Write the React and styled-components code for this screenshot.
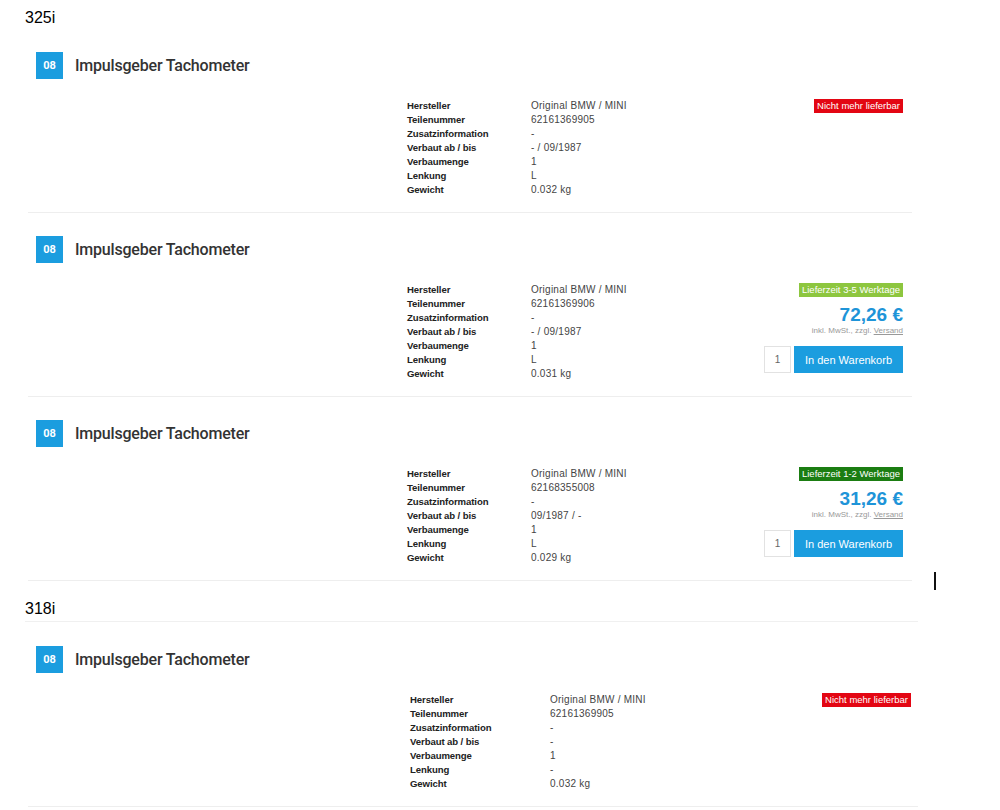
import React from "react";
import styled, { createGlobalStyle } from "styled-components";

const GlobalStyle = createGlobalStyle`
  body {
    margin: 0;
    background: #fff;
    font-family: "Liberation Sans", Arial, sans-serif;
  }
`;

const parts = [
  {
    group: "325i",
    items: [
      {
        nr: "62161369905",
        verbaut: "- / 09/1987",
        lenkung: "L",
        gewicht: "0.032 kg",
        status: "out",
      },
      {
        nr: "62161369906",
        verbaut: "- / 09/1987",
        lenkung: "L",
        gewicht: "0.031 kg",
        status: "slow",
        price: "72,26 €",
      },
      {
        nr: "62168355008",
        verbaut: "09/1987 / -",
        lenkung: "L",
        gewicht: "0.029 kg",
        status: "fast",
        price: "31,26 €",
      },
    ],
  },
  {
    group: "318i",
    wide: true,
    items: [
      {
        nr: "62161369905",
        verbaut: "-",
        lenkung: "-",
        gewicht: "0.032 kg",
        status: "out",
      },
    ],
  },
];

const statusText = {
  out: "Nicht mehr lieferbar",
  slow: "Lieferzeit 3-5 Werktage",
  fast: "Lieferzeit 1-2 Werktage",
};

const statusColor = {
  out: "#e30613",
  slow: "#8dc63f",
  fast: "#1b7d12",
};

const App = () => {
  return (
    <Page>
      <GlobalStyle />
      {parts.map((g, gi) => (
        <Group key={g.group}>
          <GroupTitle $first={gi === 0} $wide={g.wide}>
            {g.group}
          </GroupTitle>
          {g.items.map((p, i) => (
            <Product key={i} $wide={g.wide}>
              <Head>
                <Pos>08</Pos>
                <Name>Impulsgeber Tachometer</Name>
              </Head>
              <Details $wide={g.wide}>
                <span />
                <Specs $wide={g.wide}>
                  <dt>Hersteller</dt>
                  <dd>Original BMW / MINI</dd>
                  <dt>Teilenummer</dt>
                  <dd>{p.nr}</dd>
                  <dt>Zusatzinformation</dt>
                  <dd>-</dd>
                  <dt>Verbaut ab / bis</dt>
                  <dd>{p.verbaut}</dd>
                  <dt>Verbaumenge</dt>
                  <dd>1</dd>
                  <dt>Lenkung</dt>
                  <dd>{p.lenkung}</dd>
                  <dt>Gewicht</dt>
                  <dd>{p.gewicht}</dd>
                </Specs>
                <Buy>
                  <Status $color={statusColor[p.status]}>
                    {statusText[p.status]}
                  </Status>
                  {p.price && (
                    <>
                      <Price>{p.price}</Price>
                      <Tax>
                        inkl. MwSt., zzgl. <a>Versand</a>
                      </Tax>
                      <Cart>
                        <Qty defaultValue="1" />
                        <CartButton>In den Warenkorb</CartButton>
                      </Cart>
                    </>
                  )}
                </Buy>
              </Details>
            </Product>
          ))}
        </Group>
      ))}
      <Caret />
    </Page>
  );
};

const Page = styled.div`
  position: relative;
  width: 1000px;
  padding: 9px 0 0 25px;
  box-sizing: border-box;
`;

const Group = styled.section`
  display: flex;
  flex-direction: column;
`;

const GroupTitle = styled.h2`
  margin: 0;
  font-size: 16px;
  font-weight: normal;
  line-height: 18px;
  color: #000;
  padding-bottom: ${(p) => (p.$first ? "25px" : "3px")};
  margin-top: ${(p) => (p.$first ? "0" : "19px")};
  border-bottom: ${(p) => (p.$first ? "none" : "1px solid #f0f0f0")};
  width: ${(p) => (p.$wide ? "893px" : "auto")};
`;

const Product = styled.article`
  margin-left: 3px;
  width: ${(p) => (p.$wide ? "890px" : "884px")};
  padding: ${(p) => (p.$wide ? "24px 0 15px" : "0 0 15px")};
  border-bottom: 1px solid #eeeeee;
  & + & {
    padding-top: 23px;
  }
`;

const Head = styled.div`
  display: flex;
  align-items: center;
  gap: 12px;
  padding-left: 8px;
`;

const Pos = styled.span`
  width: 27px;
  height: 27px;
  display: flex;
  align-items: center;
  justify-content: center;
  background: #1b9ddf;
  color: #fff;
  font-family: Roboto, "Liberation Sans", sans-serif;
  font-weight: bold;
  font-size: 11px;
`;

const Name = styled.h3`
  margin: 0;
  font-family: Roboto, "Liberation Sans", sans-serif;
  font-size: 16px;
  font-weight: 500;
  letter-spacing: -0.2px;
  color: #333;
`;

const Details = styled.div`
  display: grid;
  grid-template-columns: ${(p) => (p.$wide ? "382px 1fr auto" : "379px 1fr auto")};
  padding-top: 20px;
  padding-right: ${(p) => (p.$wide ? "7px" : "9px")};
`;

const Specs = styled.dl`
  margin: 0;
  display: grid;
  grid-template-columns: ${(p) => (p.$wide ? "140px" : "124px")} 1fr;
  font-size: 10px;
  line-height: 14px;
  color: #333;
  dt {
    font-weight: bold;
    font-size: 9.6px;
    letter-spacing: -0.1px;
    color: #222;
  }
  dd {
    margin: 0;
    letter-spacing: 0.25px;
    color: #444;
  }
`;

const Buy = styled.div`
  display: flex;
  flex-direction: column;
  align-items: flex-end;
`;

const Status = styled.span`
  background: ${(p) => p.$color};
  color: #fff;
  font-size: 9.5px;
  line-height: 14px;
  padding: 0 3px;
  white-space: nowrap;
`;

const Price = styled.div`
  margin-top: 7px;
  font-size: 19px;
  font-weight: bold;
  line-height: 22px;
  color: #1e94d8;
`;

const Tax = styled.div`
  font-size: 8px;
  line-height: 10px;
  color: #999;
  a {
    color: #999;
    text-decoration: underline;
  }
`;

const Cart = styled.div`
  display: flex;
  gap: 3px;
  margin-top: 10px;
`;

const Qty = styled.input`
  width: 27px;
  height: 27px;
  box-sizing: border-box;
  border: 1px solid #e2e2e2;
  text-align: center;
  font-family: "Liberation Sans", Arial, sans-serif;
  font-size: 10px;
  color: #666;
  padding: 0;
`;

const CartButton = styled.button`
  width: 109px;
  height: 27px;
  border: none;
  background: #1b9ddf;
  color: #fff;
  font-family: "Liberation Sans", Arial, sans-serif;
  font-size: 11px;
  cursor: pointer;
`;

const Caret = styled.span`
  position: absolute;
  left: 934px;
  top: 572px;
  width: 2px;
  height: 18px;
  background: #111;
`;

export default App;
